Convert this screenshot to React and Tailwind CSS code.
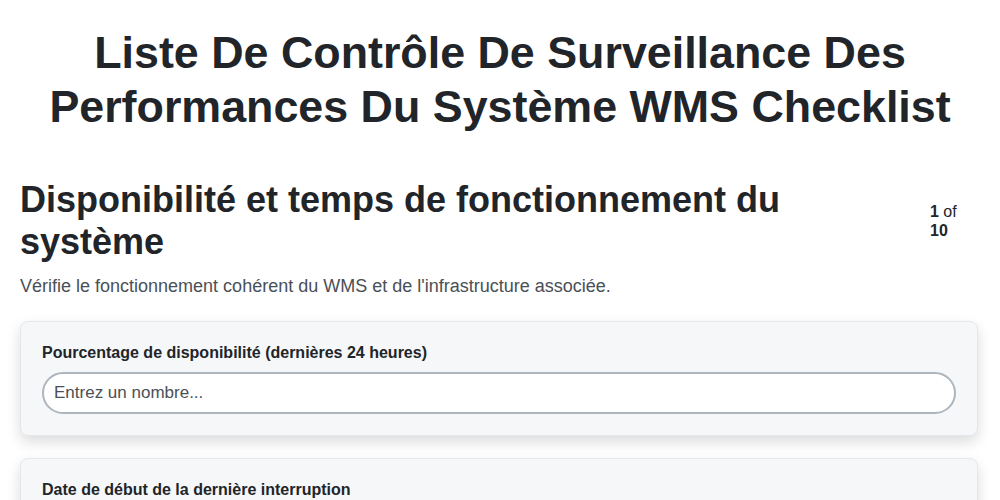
export default function App() {
  return (
    <div className="min-h-screen bg-white px-5 pt-[25px] text-[#212529]" style={{ fontFamily: '"Liberation Sans", Arial, sans-serif' }}>
      <h1 className="text-center text-[44.8px] font-bold leading-[54px] px-4">
        Liste De Contrôle De Surveillance Des Performances Du Système WMS Checklist
      </h1>

      <div className="mt-[46px] flex items-center justify-between gap-4">
        <h2 className="flex-1 text-4xl font-bold leading-[42px] pr-[130px]">
          Disponibilité et temps de fonctionnement du système
        </h2>
        <div className="w-[48px] mr-[2px] shrink-0 text-base leading-[19px]">
          <span className="font-bold">1</span> of <span className="font-bold">10</span>
        </div>
      </div>
      <p className="mt-[11px] text-[18px] leading-[24px] text-[#495057]">
        Vérifie le fonctionnement cohérent du WMS et de l'infrastructure associée.
      </p>

      <div className="mt-[23px] mr-[2px] flex flex-col gap-[22px]">
        <div className="rounded-lg border border-[#e5e7eb] bg-[#f6f7f9] p-[21px] shadow-[0_6px_14px_rgba(0,0,0,0.14)]">
          <label className="block text-base font-bold leading-5">
            Pourcentage de disponibilité (dernières 24 heures)
          </label>
          <input
            type="text"
            placeholder="Entrez un nombre..."
            className="mt-[9px] h-[42px] w-full rounded-full border-2 border-[#adb5bd] bg-white px-[10px] text-[17px] text-[#212529] placeholder:text-[#495057] focus:outline-none"
          />
        </div>
        <div className="rounded-lg border border-[#e5e7eb] bg-[#f6f7f9] p-[21px] shadow-[0_6px_14px_rgba(0,0,0,0.14)]">
          <label className="block text-base font-bold leading-5">
            Date de début de la dernière interruption
          </label>
          <input
            type="text"
            className="mt-[9px] h-[42px] w-full rounded-full border-2 border-[#adb5bd] bg-white px-[10px] text-[17px] focus:outline-none"
          />
        </div>
      </div>
    </div>
  );
}
